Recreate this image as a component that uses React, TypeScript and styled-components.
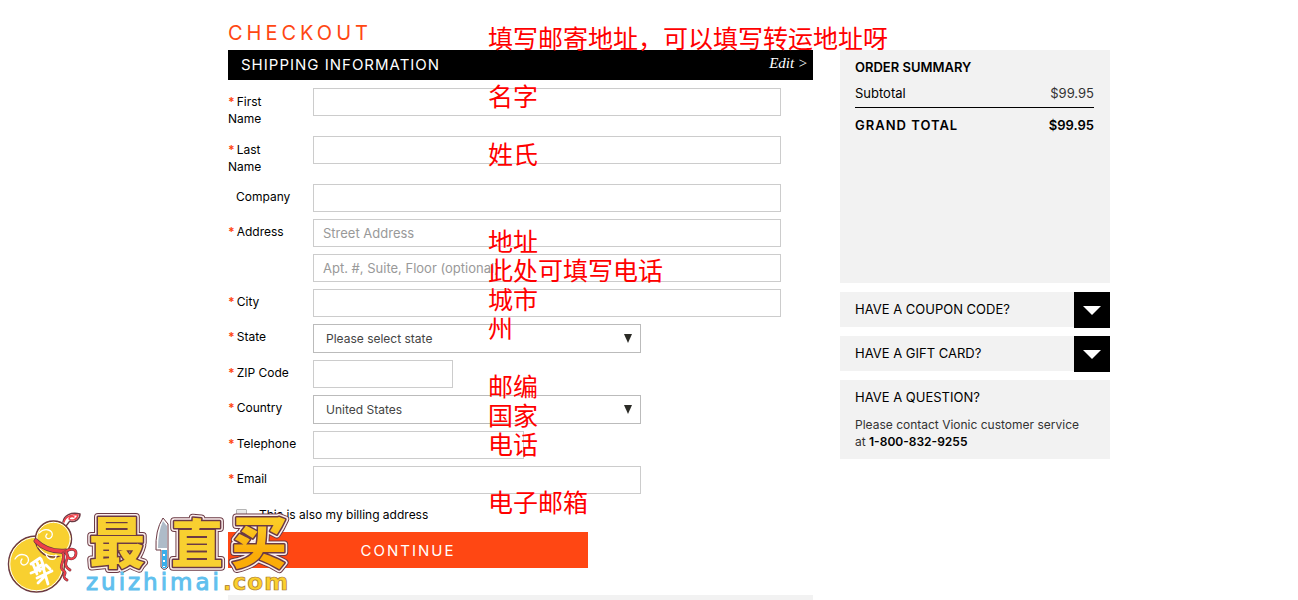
import React from "react";
import styled, { createGlobalStyle, css } from "styled-components";

const GlobalStyle = createGlobalStyle`
  *, *::before, *::after { box-sizing: border-box; }
  body {
    margin: 0;
    background: #fff;
    color: #000;
    font-family: Inter, "Noto Sans CJK SC", sans-serif;
    font-size: 12px;
    line-height: 17px;
  }
  h1, h2, p, dl, dd { margin: 0; }
  button, input, select { font: inherit; border-radius: 0; }
`;

const Page = styled.div`
  position: relative;
  min-height: 100vh;
  overflow: hidden;
`;

const Container = styled.div`
  position: relative;
  max-width: 922px;
  margin: 0 auto;
  padding: 16px 0 0 40px;
`;

const Title = styled.h1`
  color: #ff4713;
  font-size: 20px;
  font-weight: 400;
  line-height: 34px;
  letter-spacing: 4px;
`;

const Columns = styled.div`
  display: grid;
  grid-template-columns: minmax(0, 1fr) 270px;
  gap: 27px;
  align-items: start;
`;

const SectionBar = styled.div`
  display: flex;
  justify-content: space-between;
  height: 30px;
  padding: 0 5px 0 13px;
  background: #000;
  color: #fff;
`;

const SectionTitle = styled.h2`
  font-size: 15px;
  font-weight: 400;
  line-height: 30px;
  letter-spacing: 1px;
`;

const EditLink = styled.a`
  color: #fff;
  font-family: "Liberation Serif", serif;
  font-size: 15px;
  font-style: italic;
  line-height: 27px;
  text-decoration: none;
`;

const Fields = styled.div`
  display: flex;
  flex-direction: column;
  gap: 7px;
  padding-top: 8px;
`;

const Row = styled.div`
  display: grid;
  grid-template-columns: 70px minmax(0, 468px);
  column-gap: 15px;
  align-items: start;
`;

const Label = styled.label<{ $wrap?: boolean; $optional?: boolean }>`
  padding-top: 4px;
  padding-left: ${(p) => (p.$optional ? 8 : 0)}px;
  white-space: nowrap;
  ${(p) => p.$wrap && css`width: 50px; padding-top: 5px; padding-bottom: 2px; white-space: normal;`}
`;

const Star = styled.span`
  color: #ff4713;
  font-weight: 700;
  margin-right: 2px;
`;

const box = css<{ $width?: number }>`
  width: 100%;
  max-width: ${(p) => (p.$width ? `${p.$width}px` : "none")};
  border: 1px solid #ccc;
  background: #fff;
`;

const TextInput = styled.input<{ $width?: number }>`
  ${box}
  display: block;
  grid-column: 2;
  height: 28px;
  padding: 0 9px;
  font-size: 13px;
  &::placeholder { color: #999; opacity: 1; }
`;

const SelectBox = styled.div<{ $width?: number }>`
  ${box}
  display: grid;
  height: 29px;
  align-items: center;
  border-color: #bbb;
  svg { grid-area: 1 / 1; justify-self: end; margin-right: 7px; pointer-events: none; }
`;

const Select = styled.select`
  grid-area: 1 / 1;
  width: 100%;
  height: 27px;
  padding: 0 12px;
  border: 0;
  background: transparent;
  color: #444;
  appearance: none;
`;

const Billing = styled.label`
  display: flex;
  align-items: center;
  gap: 12px;
  padding: 12px 0 9px 8px;
`;

const Checkbox = styled.input`
  appearance: none;
  width: 11px;
  height: 12px;
  margin: 0;
  border: 1px solid #b5b5b5;
  border-radius: 1px;
  background: linear-gradient(#ececec, #d8d8d8);
  &:checked { background: #ff4713; }
`;

const Continue = styled.button`
  display: block;
  width: 100%;
  max-width: 360px;
  height: 36px;
  border: 0;
  background: #ff4713;
  color: #fff;
  font-size: 15px;
  letter-spacing: 2px;
`;

const NextSection = styled.div`
  height: 5px;
  margin-top: 27px;
  background: #f2f2f2;
`;

const Aside = styled.aside`
  display: flex;
  flex-direction: column;
  gap: 9px;
`;

const Panel = styled.section<{ $minHeight?: number }>`
  min-height: ${(p) => p.$minHeight ?? 0}px;
  padding: 8px 16px 9px 15px;
  background: #f2f2f2;
`;

const PanelTitle = styled.h2<{ $bold?: boolean }>`
  font-size: 13px;
  font-weight: ${(p) => (p.$bold ? 600 : 400)};
  line-height: 18px;
`;

const Totals = styled.dl`
  padding-top: 8px;
`;

const TotalLine = styled.div<{ $grand?: boolean }>`
  display: flex;
  justify-content: space-between;
  font-size: 13px;
  line-height: 18px;
  ${(p) =>
    p.$grand
      ? css`
          padding-top: 8px;
          border-top: 1px solid #000;
          font-weight: 600;
          dt { letter-spacing: 1px; }
        `
      : css`
          padding-bottom: 5px;
          dd { color: #333; }
        `}
`;

const Toggle = styled.button`
  display: flex;
  justify-content: space-between;
  align-items: flex-start;
  width: 100%;
  height: 35px;
  padding: 0 0 0 15px;
  border: 0;
  background: #f2f2f2;
  color: #000;
  font-size: 13px;
  line-height: 35px;
  text-align: left;
`;

const ToggleIcon = styled.span`
  display: grid;
  place-items: center;
  width: 36px;
  height: 36px;
  background: #000;
`;

const Help = styled.p`
  padding: 10px 10px 0 0;
  color: #333;
  strong { color: #000; font-weight: 600; }
`;

const Notes = styled.div`
  position: absolute;
  top: 23px;
  left: 300px;
  color: #f00;
  font-family: "Noto Sans CJK SC", sans-serif;
  font-size: 25px;
  line-height: 29px;
  white-space: pre;
  pointer-events: none;
`;

const Watermark = styled.svg`
  position: absolute;
  top: 480px;
  left: 0;
  pointer-events: none;
`;

const notes = [
  "填写邮寄地址，可以填写转运地址呀", "", "名字", "", "姓氏", "", "",
  "地址", "此处可填写电话", "城市", "州", "", "邮编", "国家", "电话", "", "电子邮箱",
].join("\n");

type FieldProps = {
  id: string;
  label: string;
  optional?: boolean;
  wrap?: boolean;
  children: React.ReactNode;
};

function Field({ id, label, optional, wrap, children }: FieldProps) {
  return (
    <Row>
      <Label htmlFor={id} $wrap={wrap} $optional={optional}>
        {!optional && <Star>*</Star>}
        {label}
      </Label>
      {children}
    </Row>
  );
}

function Dropdown({ id, option }: { id: string; option: string }) {
  return (
    <SelectBox $width={328}>
      <Select id={id}>
        <option>{option}</option>
      </Select>
      <svg width="10" height="9" viewBox="0 0 10 9" aria-hidden="true">
        <path d="M1 0H9L5 9Z" fill="#2b2b26" />
      </svg>
    </SelectBox>
  );
}

function Expander({ children }: { children: React.ReactNode }) {
  return (
    <Toggle type="button" aria-expanded="false">
      {children}
      <ToggleIcon>
        <svg width="18" height="9" viewBox="0 0 18 9" aria-hidden="true">
          <path d="M0 0H18L9 9Z" fill="#fff" />
        </svg>
      </ToggleIcon>
    </Toggle>
  );
}

const outline = [
  { stroke: "#6b3a44", width: 8 },
  { stroke: "#fbeeee", width: 6 },
  { stroke: "#6b3a44", width: 3 },
];

type GlyphProps = { x: number; y: number; size: number; fill: string; children: string };

function LogoGlyph({ x, y, size, fill, children }: GlyphProps) {
  const font = {
    x, y, fontSize: size, fontWeight: 900,
    fontFamily: '"Noto Sans CJK SC", sans-serif', strokeLinejoin: "round" as const,
  };
  return (
    <>
      {outline.map((o) => (
        <text key={o.width} {...font} fill={o.stroke} stroke={o.stroke} strokeWidth={o.width} aria-hidden="true">
          {children}
        </text>
      ))}
      <text {...font} fill={fill}>{children}</text>
    </>
  );
}

function Logo() {
  return (
    <Watermark width="300" height="120" viewBox="0 -25 300 120" role="img" aria-label="zuizhimai.com">
      <defs>
        <linearGradient id="gold" x1="0" y1="0" x2="0" y2="1">
          <stop offset="0.3" stopColor="#fbcb26" />
          <stop offset="0.7" stopColor="#fbac08" />
        </linearGradient>
      </defs>
      <g strokeLinecap="round" strokeLinejoin="round">
        <path d="M63 17C64 10 71 7 80 9C80 14 75 18 70 16C68 18 67 20 66 21" fill="#fff" stroke="#6b3a44" strokeWidth="1.500" />
        <path d="M64 17C65 12 71 9 78 10C77 15 72 16 69 14C69 12 72 11 74 12" fill="none" stroke="#ee3f48" strokeWidth="1.500" />
        <circle cx="36.500" cy="59" r="28" fill="#f8d030" stroke="#6b3a44" strokeWidth="1.500" />
        <circle cx="36.500" cy="59" r="26.700" fill="none" stroke="#fff" />
        <circle cx="53.500" cy="34" r="18" fill="#f8d030" stroke="#6b3a44" strokeWidth="1.500" />
        <circle cx="53.500" cy="34" r="16.700" fill="none" stroke="#fff" />
        <path d="M38 38L66 46L62 52L37 42Z" fill="#f8d030" />
        <path d="M39 28C45 22 54 25 52 31C50 36 43 33 47 29M15 54C20 46 31 50 28 57C25 63 18 59 22 54M46 49C48 56 57 56 56 50" fill="none" stroke="#fff" strokeWidth="1.300" />
        <path d="M36 36C45 45 55 47 66 46" fill="none" stroke="#6b3a44" strokeWidth="5" />
        <path d="M36 36C45 45 55 47 66 46" fill="none" stroke="#ee3f48" strokeWidth="3.600" />
        <path d="M66 46C71 43 76 44 76 48C76 53 71 56 68 52L66 46M63 48C66 56 57 62 64 66C68 69 60 71 67 75M66 48C71 54 60 59 70 65" fill="none" stroke="#6b3a44" strokeWidth="2.800" />
        <path d="M66 46C71 43 76 44 76 48C76 53 71 56 68 52L66 46M63 48C66 56 57 62 64 66C68 69 60 71 67 75M66 48C71 54 60 59 70 65" fill="none" stroke="#ee3f48" strokeWidth="1.800" />
        <path d="M31 59L40 53M33 59L37 69M37 57L40 66M41 54L44 62M35 64L43 59M31 68L44 63M37 73L52 66M43 62L48 79M44 72L38 78M46 60L50 64" fill="none" stroke="#fff" strokeWidth="2.800" />
      </g>
      <LogoGlyph x={89} y={58} size={56} fill="#f8d030">最</LogoGlyph>
      <path d="M163 13Q155 25 156 45H161V62Q164 67 168 62V45H168V19Z" fill="#fff" stroke="#6b3a44" strokeWidth="1" />
      <path d="M163 16Q158 27 158 43H167V21Z" fill="#aebbc8" />
      <path d="M162 45H167V62Q164 65 162 62Z" fill="#3aaeea" />
      <path d="M164 49V51M164 55V57M164 61V62" stroke="#fff" strokeWidth="2" />
      <LogoGlyph x={171} y={58} size={52} fill="#f8d030">直</LogoGlyph>
      <LogoGlyph x={231} y={58} size={56} fill="url(#gold)">买</LogoGlyph>
      <text x="86" y="85" fontFamily='"DejaVu Sans", sans-serif' fontSize="23" letterSpacing="3" fill="#60c0ee" stroke="#60c0ee">
        zuizhimai
      </text>
      <text x="223" y="85" fontFamily='"DejaVu Sans", sans-serif' fontSize="23" fontWeight="700" letterSpacing="1" fill="#fbd02c" stroke="#a8762e" strokeWidth="0.700">
        .com
      </text>
    </Watermark>
  );
}

export default function App() {
  return (
    <Page>
      <GlobalStyle />
      <Container>
        <Title>CHECKOUT</Title>
        <Columns>
          <main>
            <SectionBar>
              <SectionTitle>SHIPPING INFORMATION</SectionTitle>
              <EditLink href="#edit">Edit &gt;</EditLink>
            </SectionBar>
            <form onSubmit={(e) => e.preventDefault()}>
              <Fields>
                <Field id="first" label="First Name" wrap><TextInput id="first" /></Field>
                <Field id="last" label="Last Name" wrap><TextInput id="last" /></Field>
                <Field id="company" label="Company" optional><TextInput id="company" /></Field>
                <Field id="street" label="Address"><TextInput id="street" placeholder="Street Address" /></Field>
                <Row>
                  <TextInput aria-label="Apartment, suite or floor" placeholder="Apt. #, Suite, Floor (optional)" />
                </Row>
                <Field id="city" label="City"><TextInput id="city" /></Field>
                <Field id="state" label="State"><Dropdown id="state" option="Please select state" /></Field>
                <Field id="zip" label="ZIP Code"><TextInput id="zip" $width={140} /></Field>
                <Field id="country" label="Country"><Dropdown id="country" option="United States" /></Field>
                <Field id="phone" label="Telephone"><TextInput id="phone" type="tel" $width={211} /></Field>
                <Field id="email" label="Email"><TextInput id="email" type="email" $width={328} /></Field>
              </Fields>
              <Billing>
                <Checkbox type="checkbox" />
                This is also my billing address
              </Billing>
              <Continue type="submit">CONTINUE</Continue>
            </form>
            <NextSection />
          </main>
          <Aside>
            <Panel $minHeight={233}>
              <PanelTitle $bold>ORDER SUMMARY</PanelTitle>
              <Totals>
                <TotalLine><dt>Subtotal</dt><dd>$99.95</dd></TotalLine>
                <TotalLine $grand><dt>GRAND TOTAL</dt><dd>$99.95</dd></TotalLine>
              </Totals>
            </Panel>
            <Expander>HAVE A COUPON CODE?</Expander>
            <Expander>HAVE A GIFT CARD?</Expander>
            <Panel>
              <PanelTitle>HAVE A QUESTION?</PanelTitle>
              <Help>
                Please contact Vionic customer service at <strong>1-800-832-9255</strong>
              </Help>
            </Panel>
          </Aside>
        </Columns>
        <Notes>{notes}</Notes>
      </Container>
      <Logo />
    </Page>
  );
}
